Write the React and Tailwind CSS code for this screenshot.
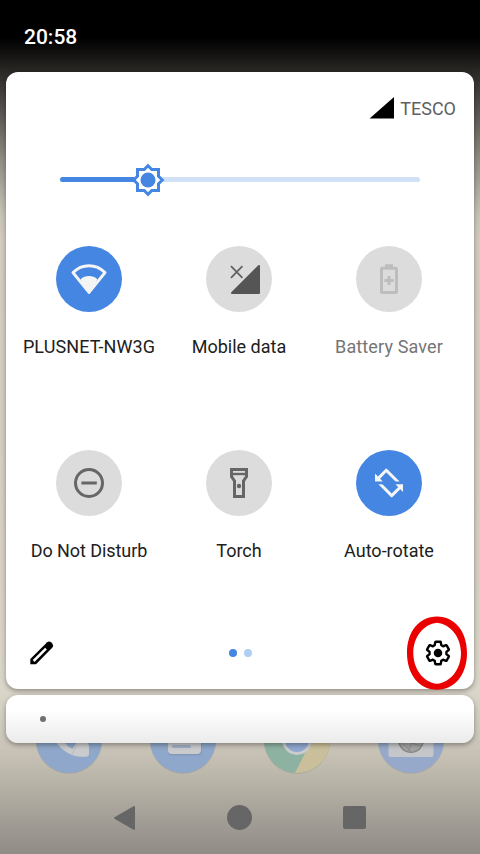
import React from "react";

const STAR =
  "M0-14.3L3.8-10.5H10.5V-3.8L14.3 0L10.5 3.8V10.5H3.8L0 14.3L-3.8 10.5H-10.5V3.8L-14.3 0L-10.5-3.8V-10.5H-3.8Z";

const GEAR =
  "M19.43 12.98c.04-.32.07-.64.07-.98 0-.34-.03-.66-.07-.98l2.11-1.65c.19-.15.24-.42.12-.64l-2-3.46a.5.5 0 0 0-.61-.22l-2.49 1c-.52-.4-1.08-.73-1.69-.98l-.38-2.65A.488.488 0 0 0 14 2h-4c-.25 0-.46.18-.49.42l-.38 2.65c-.61.25-1.17.59-1.69.98l-2.49-1a.566.566 0 0 0-.18-.03c-.17 0-.34.09-.43.25l-2 3.46c-.13.22-.07.49.12.64l2.11 1.65c-.04.32-.07.65-.07.98 0 .33.03.66.07.98l-2.11 1.65c-.19.15-.24.42-.12.64l2 3.46a.5.5 0 0 0 .61.22l2.49-1c.52.4 1.08.73 1.69.98l.38 2.65c.03.24.24.42.49.42h4c.25 0 .46-.18.49-.42l.38-2.65c.61-.25 1.17-.59 1.69-.98l2.49 1c.06.02.12.03.18.03.17 0 .34-.09.43-.25l2-3.46c.12-.22.07-.49-.12-.64l-2.11-1.65z";

const WifiIcon = () => (
  <g>
    <path d="M33 46.3L17 26.6C26 17.4 40 17.4 49 26.6Z" fill="none" stroke="#f5f5f5" strokeWidth="3" strokeLinejoin="round" />
    <path d="M33 48L24.6 33.2C29 28.9 37 28.9 41.4 33.2Z" fill="#f5f5f5" />
    <path d="M33 47.5L23.5 35.6L42.5 35.6Z" fill="#f5f5f5" />
  </g>
);

const MobileIcon = () => (
  <g>
    <path d="M53 20V47H26Z" fill="#555" stroke="#555" strokeWidth="2" strokeLinejoin="round" />
    <path d="M25 20.2L36.4 31.8M36.4 20.2L25 31.8" stroke="#606060" strokeWidth="1.7" />
  </g>
);

const BatteryIcon = () => (
  <g fill="none" stroke="#bdbdbd" strokeWidth="3">
    <rect x="25.5" y="22.2" width="15" height="24.3" rx="0.8" />
    <path d="M29 19.8H37M28.3 34.5H37.7M33 30V39" />
  </g>
);

const DndIcon = () => (
  <g fill="none" stroke="#666" strokeWidth="3">
    <circle cx="33" cy="33" r="13.5" />
    <path d="M25.4 33H40.8" />
  </g>
);

const TorchIcon = () => (
  <g>
    <path d="M25.5 19.5H40.5V26.6L37.5 31V46.5H28.5V31L25.5 26.6Z" fill="none" stroke="#666" strokeWidth="3" />
    <path d="M25 24H41" stroke="#666" strokeWidth="2.4" />
    <circle cx="33" cy="36" r="2.2" fill="#666" />
  </g>
);

const RotateIcon = () => (
  <g>
    <clipPath id="rotate-top">
      <rect width="66" height="31.4" />
    </clipPath>
    <clipPath id="rotate-bottom">
      <rect y="34.3" width="66" height="31.7" />
    </clipPath>
    <path d="M22 28.6L30.3 20.2L42.6 32.5" clipPath="url(#rotate-top)" fill="none" stroke="#f5f5f5" strokeWidth="3" strokeLinejoin="round" />
    <path d="M23.4 33.3L35.7 45.6L44.2 37.2" clipPath="url(#rotate-bottom)" fill="none" stroke="#f5f5f5" strokeWidth="3" strokeLinejoin="round" />
    <path d="M19 23.6V31.4H26.8ZM47 34.3V42.1L39.4 34.3Z" fill="#f5f5f5" />
  </g>
);

const TILES = [
  { label: "PLUSNET-NW3G", Icon: WifiIcon, disc: "bg-[#4486e2]", text: "text-[#202020] tracking-[0.1px]" },
  { label: "Mobile data", Icon: MobileIcon, disc: "bg-[#dcdcdc]", text: "text-[#202020]" },
  { label: "Battery Saver", Icon: BatteryIcon, disc: "bg-[#dcdcdc]", text: "text-[#757575] tracking-[0.13px]" },
  { label: "Do Not Disturb", Icon: DndIcon, disc: "bg-[#dcdcdc]", text: "text-[#202020] tracking-[-0.08px]" },
  { label: "Torch", Icon: TorchIcon, disc: "bg-[#dcdcdc]", text: "text-[#202020]" },
  { label: "Auto-rotate", Icon: RotateIcon, disc: "bg-[#4486e2]", text: "text-[#202020]" },
];

function Tile({ label, Icon, disc, text }) {
  return (
    <div className="flex h-[204px] flex-col items-center">
      <div className={"size-[66px] rounded-full " + disc}>
        <svg width="66" height="66" viewBox="0 0 66 66">
          <Icon />
        </svg>
      </div>
      <div className={"mt-[23px] whitespace-nowrap text-[18px] leading-6 " + text}>{label}</div>
    </div>
  );
}

function Slider() {
  return (
    <div className="mt-[39px] ml-[54px] flex h-[41px] w-[360px] items-center">
      <div className="h-[5px] w-[74px] rounded-l-full bg-[#4486e2]" />
      <svg className="relative -mx-[3px] shrink-0" width="34" height="40" viewBox="-17 -20 34 40" overflow="visible">
        <path d={STAR} fill="#fff" stroke="#4486e2" strokeWidth="3" />
        <circle r="7.5" fill="#4486e2" />
      </svg>
      <div className="h-[5px] flex-1 rounded-r-full bg-[#cfe0f7]" />
    </div>
  );
}

/* Launcher shortcuts: only the part below the notification card shows. */
function Dock() {
  return (
    <div className="flex h-[34px] justify-between px-9">
      <svg width="66" height="34" viewBox="0 36 66 34">
        <circle cx="33" cy="33.8" r="33" fill="#857f77" opacity=".3" />
        <circle cx="33" cy="33" r="33" fill="#8ea7ca" />
        <path d="M19 34C26 43.5 35 49.7 45 49.7H50Q53 49.7 53 46.7V39L51 34Z" fill="#c9cbcd" />
        <path d="M28 35H41L36.5 42Q32 40 28 35Z" fill="#8ea7ca" />
        <path d="M36 47L41 38" stroke="#b7babd" strokeWidth="1" />
      </svg>
      <svg width="66" height="34" viewBox="0 36 66 34">
        <circle cx="33" cy="33.8" r="33" fill="#857f77" opacity=".3" />
        <circle cx="33" cy="33" r="33" fill="#8ea7ca" />
        <rect x="18" y="25" width="34" height="23.5" rx="4" fill="#8299bb" />
        <rect x="18" y="24" width="33" height="23" rx="4" fill="#c9cbcd" />
        <rect x="22" y="38" width="19" height="3" rx="1.5" fill="#9eaec6" />
      </svg>
      <svg width="66" height="34" viewBox="0 36 66 34">
        <circle cx="33" cy="33.8" r="33" fill="#857f77" opacity=".3" />
        <circle cx="33" cy="33" r="33" fill="#8eb2a1" />
        <path d="M31 66L46 36H66A33 33 0 0 1 31 66Z" fill="#cabf9b" />
        <circle cx="33" cy="33" r="15" fill="#c9cbcd" />
        <circle cx="33" cy="33" r="12" fill="#91a8cf" />
      </svg>
      <svg width="66" height="34" viewBox="0 36 66 34">
        <circle cx="33" cy="33.8" r="33" fill="#857f77" opacity=".3" />
        <circle cx="33" cy="33" r="33" fill="#97a9cb" />
        <rect x="10.5" y="20" width="45" height="30" rx="2" fill="#c4c6c9" />
        <circle cx="33" cy="33" r="13" fill="#858687" />
        <circle cx="33" cy="33" r="11.5" fill="#a4a4a4" />
        <path d="M24 36L33 44M30 44L35 34M33 36L43 39" stroke="#8d8d8d" strokeWidth="1" />
      </svg>
    </div>
  );
}

export default function App() {
  return (
    <div className="flex h-[854px] w-[480px] flex-col overflow-hidden bg-[linear-gradient(to_bottom,#000_0px,#000_37px,#0c0b0b_48px,#2b2926_72px,#5c5954_115px,#918d85_160px,#c9c4b8_215px,#d3cdc0_240px,#d5cfc2_480px,#d9d4c7_640px,#dbd6ca_690px,#cdc8bc_735px,#c6c1b4_755px,#b3afa3_790px,#a29e96_820px,#918d86_854px)] font-[Roboto,sans-serif]">
      <header className="flex h-[72px] items-center pl-6 text-[21px] font-medium text-white">
        <span className="pt-0.5 leading-6">20:58</span>
      </header>

      <section className="relative mx-1.5 flex h-[617px] shrink-0 flex-col rounded-xl bg-white shadow-[0_2px_5px_rgba(0,0,0,0.35)]">
        <div className="mt-6 mr-[18px] flex h-6 items-center justify-end gap-1.5 text-[18px] text-[#5f5f5f]">
          <svg width="25" height="22" viewBox="0 0 25 22">
            <path d="M.6 21.5L25 0V21.5Z" fill="#000" />
          </svg>
          <span>TESCO</span>
        </div>
        <Slider />
        <div className="mx-[8px] mt-[46px] grid grid-cols-[150px_150px_150px]">
          {TILES.map((t) => (
            <Tile key={t.label} {...t} />
          ))}
        </div>
        <footer className="-mt-[20px] flex h-[38px] items-center justify-between pr-[21px] pl-[21px]">
          <svg width="30" height="30" viewBox="0 0 30 30">
            <path d="M3.3 26.3V21L20.2 4.3Q22.3 2.6 24.4 4.6L25.3 5.5Q27 7.6 25.2 9.8L9 26.3Z" />
            <path d="M6.6 23L19 10.6" stroke="#fff" strokeWidth="2.5" />
          </svg>
          <div className="flex gap-[7px]">
            <span className="size-2 rounded-full bg-[#4486e2]" />
            <span className="size-2 rounded-full bg-[#b0cdf4]" />
          </div>
          <svg width="30" height="30" viewBox="0 0 24 24">
            <path d={GEAR} transform="translate(1.2 1.2) scale(.9)" fill="none" stroke="#000" strokeWidth="2.1" strokeLinejoin="round" />
            <circle cx="12" cy="12" r="3.4" />
          </svg>
        </footer>
        <svg className="absolute right-[7px] -bottom-px z-10" width="60" height="74" viewBox="0 0 60 74">
          <path
            fillRule="evenodd"
            fill="#eb0000"
            d="M30 .5C48 .5 60 15.5 60 37S48 73.7 30 73.7S0 58.5 0 37S12 .5 30 .5ZM30 6.7C16.5 8 6.3 21 6.3 37S16.5 66.5 30 67.8C43.5 66.5 54 53 54 37S43.5 8 30 6.7Z"
          />
        </svg>
      </section>

      <section className="relative mx-1.5 mt-1.5 flex h-12 shrink-0 items-center rounded-xl bg-linear-to-b from-white from-30% to-[#ebebeb] pl-[34px] shadow-[0_2px_5px_rgba(0,0,0,0.35)]">
        <span className="size-1.5 rounded-full bg-[#707070]" />
      </section>

      <Dock />

      <nav className="mt-[25.5px] flex h-[30px] items-center justify-between pr-[114px] pl-[113px]">
        <svg width="22" height="26" viewBox="0 0 22 26">
          <path d="M2 13L21 2V24Z" fill="#666" stroke="#666" strokeWidth="2" strokeLinejoin="round" />
        </svg>
        <span className="size-[25px] rounded-full bg-[#666]" />
        <span className="size-[23px] rounded-[2px] bg-[#666]" />
      </nav>
    </div>
  );
}
